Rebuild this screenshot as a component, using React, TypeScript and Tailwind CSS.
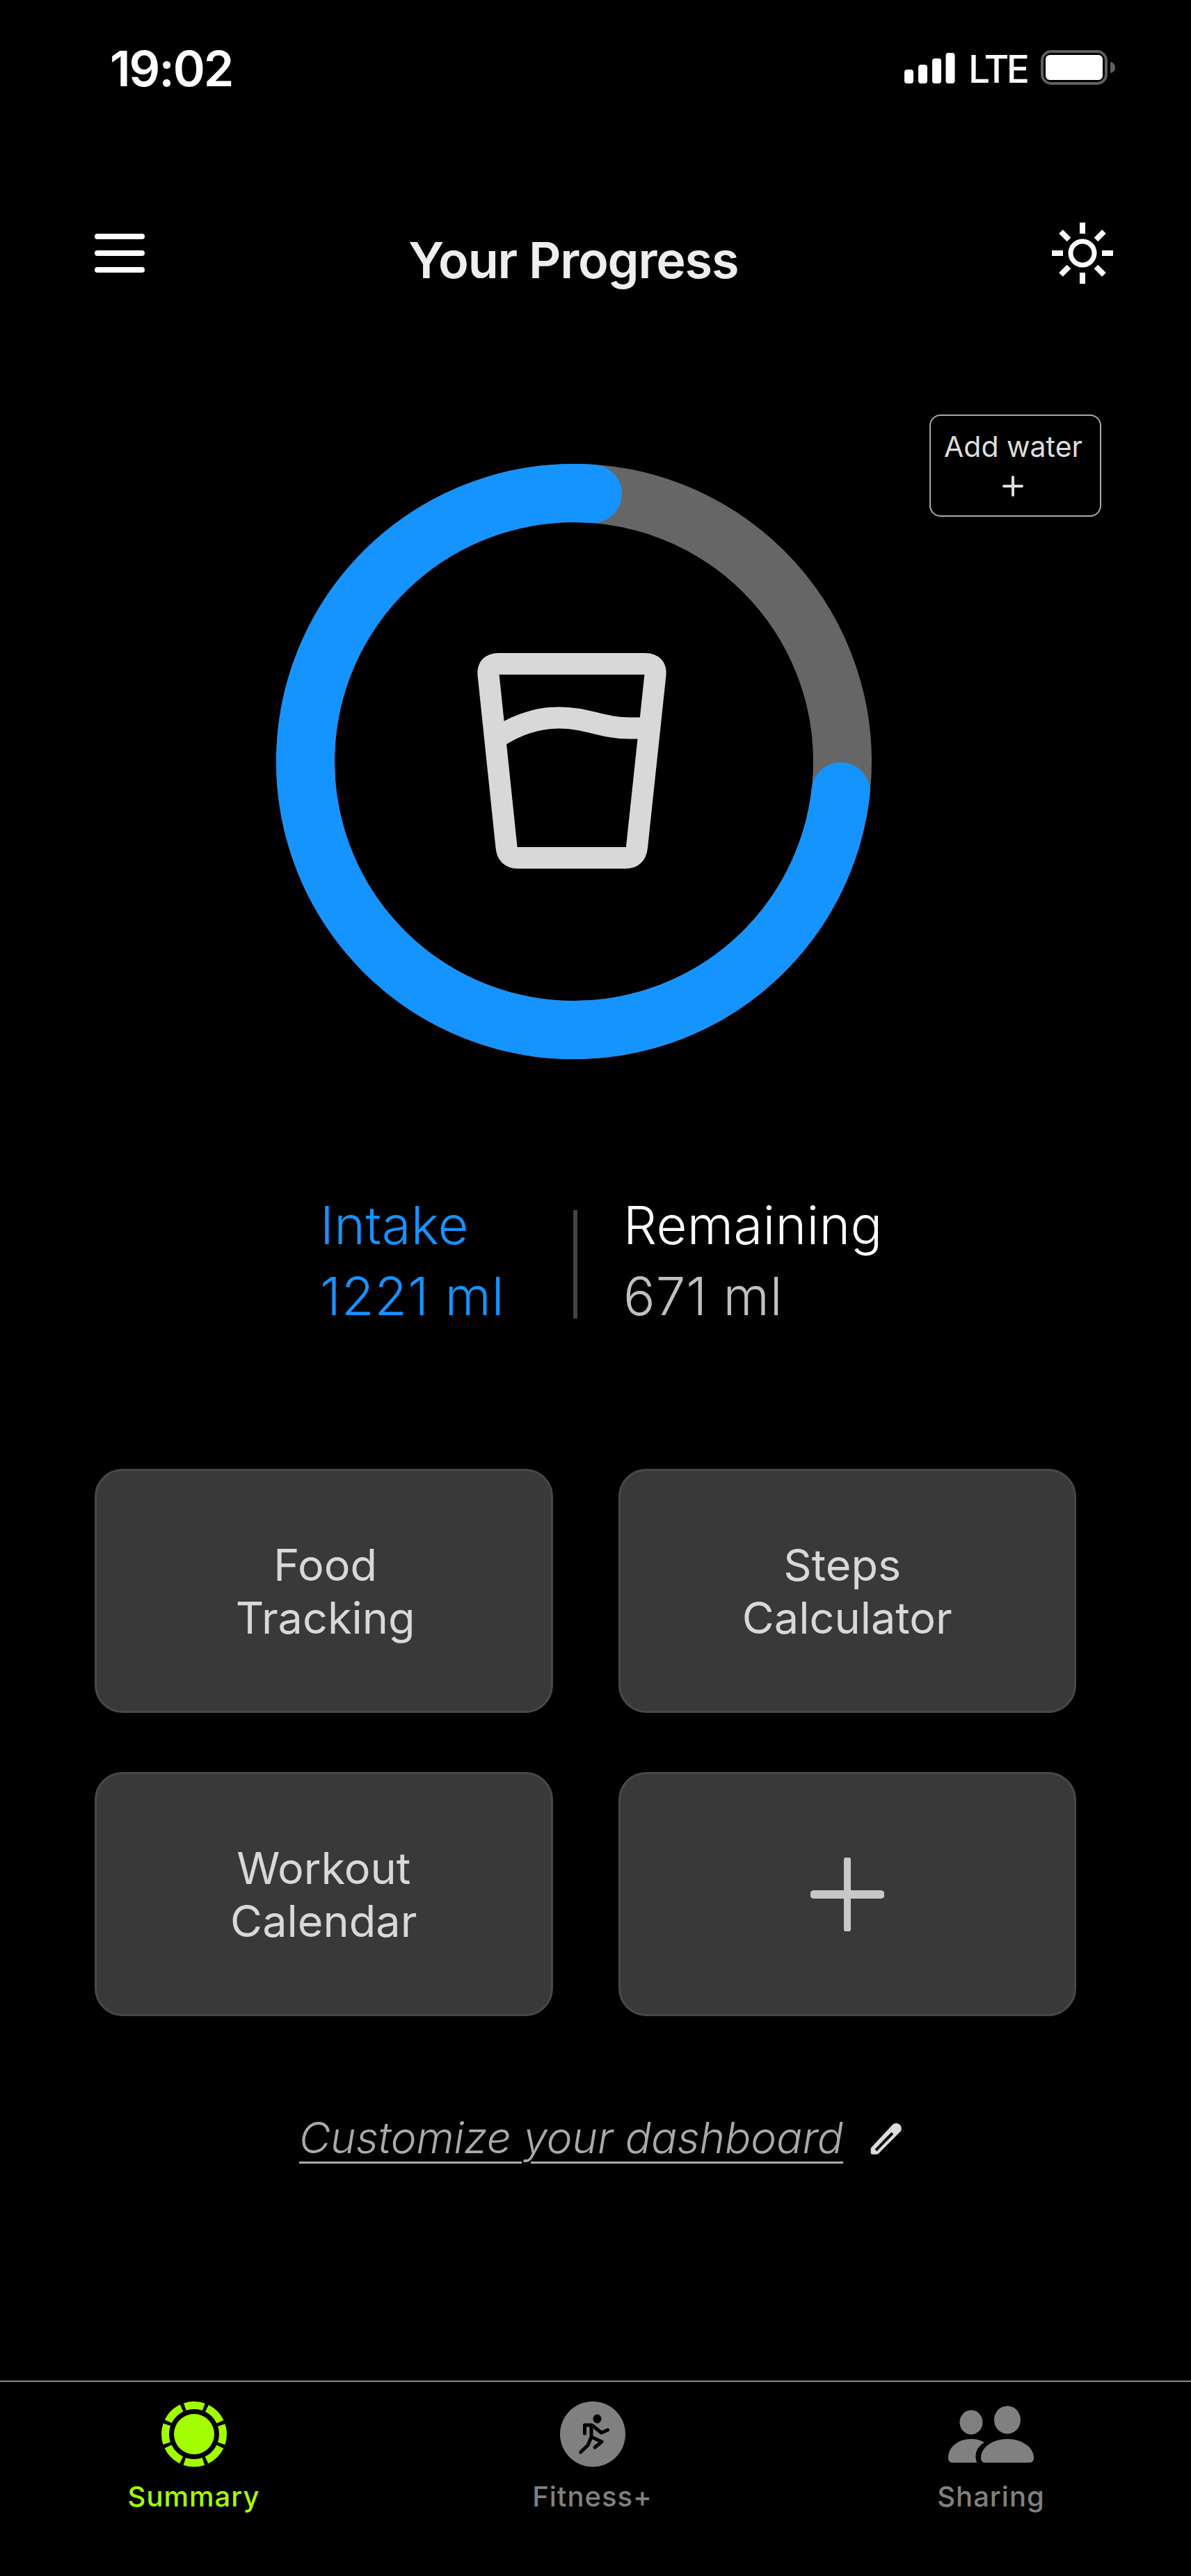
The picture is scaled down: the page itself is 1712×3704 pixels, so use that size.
import React from 'react';

const BLUE = '#1593FF';

const SignalBars = () => (
  <svg width="73" height="44" viewBox="1300 76 73 44" className="mt-[4px]" fill="#fff">
    <rect x="1300" y="100" width="13" height="20" rx="4" />
    <rect x="1320" y="93" width="13" height="27" rx="4" />
    <rect x="1340" y="84" width="13" height="36" rx="4" />
    <rect x="1359.5" y="76" width="13" height="44" rx="4" />
  </svg>
);

const Battery = () => (
  <svg width="107" height="50" viewBox="1496 72 107 50">
    <rect x="1498" y="74" width="92" height="46" rx="13" fill="none" stroke="#5f5f5f" strokeWidth="4" />
    <rect x="1503" y="79" width="82" height="36" rx="6" fill="#fff" />
    <path d="M1596 89 C1601 90 1603 93 1603 97 C1603 101 1601 104 1596 105 Z" fill="#5f5f5f" />
  </svg>
);

const Sun = () => (
  <svg width="88" height="88" viewBox="1512 320 88 88" fill="none" stroke="#fff" strokeWidth="8">
    <circle cx="1556" cy="364" r="17" strokeWidth="7" />
    <path d="M1556 320V336M1556 392V408M1512 364H1528M1584 364H1600" />
    <path d="M1525 333L1536.500 344.500M1587 333L1575.500 344.500M1525 395L1536.500 383.500M1587 395L1575.500 383.500" />
  </svg>
);

const WaterRing = () => (
  <svg width="856" height="856" viewBox="397 667 856 856" fill="none" className="ml-[397px] -mt-[76px]">
    <circle cx="825" cy="1095" r="386" stroke="#666666" strokeWidth="84" />
    <path d="M851.900 710 A386 386 0 1 0 1208.600 1138" stroke={BLUE} strokeWidth="84" strokeLinecap="round" />
    <path
      d="M717 954.500H927Q943.500 954.500 942 970L915.500 1218Q914 1233.500 899 1233.500H744Q729.500 1233.500 728 1218L702 970Q700.500 954.500 717 954.500Z"
      stroke="#D8D8D8"
      strokeWidth="31"
    />
    <path d="M712 1062C745 1040 775 1032 803 1032C845 1032 865 1047 905 1047H935" stroke="#D8D8D8" strokeWidth="31" />
  </svg>
);

const Card = ({ children }: { children: React.ReactNode }) => (
  <div className="h-[351px] rounded-[40px] border-[3px] border-[#484848] bg-[#393939] flex flex-col items-center justify-center text-[63px] leading-[76px] text-[#d8d8d8]">
    {children}
  </div>
);

const Pencil = () => (
  <svg width="46" height="46" viewBox="66 48 134 134" className="ml-[39px] mt-[9px]">
    <path
      fillRule="evenodd"
      fill="#dcdcdc"
      d="M68 155L158 58Q170 46 186 54Q202 68 194 84L100 178Q96 181 90 181H76Q68 181 68 173ZM85 160L93 168L163 97L155 88Z"
    />
  </svg>
);

const SummaryIcon = () => (
  <svg width="94" height="96" viewBox="0 0 94 94" fill="none">
    <circle cx="47" cy="47" r="29" fill="#A3FF00" />
    <circle cx="47" cy="47" r="41.500" stroke="#A3FF00" strokeWidth="11" strokeDasharray="27.600 5" strokeDashoffset="13.800" />
  </svg>
);

const FitnessIcon = () => (
  <svg width="94" height="96" viewBox="805 3452 94 94">
    <circle cx="852" cy="3499" r="47" fill="#808080" />
    <ellipse cx="858.500" cy="3477" rx="6" ry="6.500" fill="#000" />
    <path
      d="M840.500 3498V3486H850V3503L865 3510L855 3518M850 3503L845 3515L834.500 3525M852 3487L864.500 3497L873.500 3493"
      fill="none"
      stroke="#000"
      strokeWidth="5"
      strokeLinecap="round"
      strokeLinejoin="round"
    />
  </svg>
);

const SharingIcon = () => (
  <svg width="124" height="96" viewBox="1364 3452 124 94" fill="#808080">
    <ellipse cx="1397" cy="3482" rx="16.500" ry="17.500" />
    <ellipse cx="1449" cy="3478.500" rx="19" ry="20" />
    <path d="M1417 3540Q1411 3540 1411 3533C1411 3518 1428 3506 1449 3506C1470 3506 1487 3518 1487 3533Q1487 3540 1481 3540Z" />
    <path d="M1370 3540Q1364 3540 1364 3533C1364 3518 1378 3506 1397 3506C1403 3506 1410 3507 1416 3511C1405 3517 1401 3528 1405 3540Z" />
  </svg>
);

const NavItem = ({ label, color, children }: { label: string; color: string; children: React.ReactNode }) => (
  <div className={`w-[573px] flex flex-col items-center ${color}`}>
    {children}
    <span className="mt-[18px] text-[40px] leading-[48px] font-medium tracking-[1px]">{label}</span>
  </div>
);

export default function App() {
  return (
    <div className="w-[1712px] h-[3704px] bg-black text-white flex flex-col overflow-hidden font-['Inter',sans-serif]">
      <div className="h-[320px] pt-[64px] pl-[158px] pr-[109px] flex justify-between items-start">
        <span className="text-[70px] leading-none font-semibold tracking-[-2px]">19:02</span>
        <div className="flex items-start mt-[8px]">
          <SignalBars />
          <span className="w-[79px] ml-[19px] text-[55px] leading-none font-medium tracking-[-3.500px]">LTE</span>
          <div className="ml-[25px]">
            <Battery />
          </div>
        </div>
      </div>

      <div className="h-[88px] pl-[136px] pr-[112px] flex items-center">
        <div className="w-[72px] flex flex-col gap-[16px]">
          <div className="h-[8px] rounded-full bg-white" />
          <div className="h-[8px] rounded-full bg-white" />
          <div className="h-[8px] rounded-full bg-white" />
        </div>
        <h1 className="ml-[379px] mt-[20px] text-[72px] leading-none font-semibold tracking-[-1.200px] text-[#eeeeee]">Your Progress</h1>
        <div className="ml-auto">
          <Sun />
        </div>
      </div>

      <div className="mt-[188px] pr-[129px] flex justify-end">
        <button className="w-[247px] h-[147px] rounded-[16px] border-2 border-[#aaaaaa] pb-[9px] flex flex-col items-center justify-center text-[#dddddd]">
          <span className="text-[41px] leading-[50px] -translate-x-[3px]">Add water</span>
          <svg width="30" height="30" viewBox="0 0 30 30" className="mt-[17px] -translate-x-[4px]" stroke="#dddddd" strokeWidth="4" strokeLinecap="round">
            <path d="M15 2V28M2 15H28" />
          </svg>
        </button>
      </div>

      <WaterRing />

      <div className="mt-[187px] pl-[460px] flex items-start">
        <div className="w-[364px] text-[76px] leading-[102px] font-[350] text-[#1593ff]">
          <div className="tracking-[0.300px]">Intake</div>
          <div className="tracking-[1px]">1221 ml</div>
        </div>
        <div className="w-[6px] h-[156px] mt-[30px] bg-[#444444]" />
        <div className="ml-[66px] text-[76px] leading-[102px] font-[350]">
          <div className="tracking-[0.300px]">Remaining</div>
          <div className="tracking-[1px] text-[#c0c0c0]">671 ml</div>
        </div>
      </div>

      <div className="mt-[198px] ml-[136px] w-[1411px] grid grid-cols-2 gap-x-[94px] gap-y-[85px]">
        <Card>
          <span className="pl-[5px]">Food</span>
          <span className="pl-[5px]">Tracking</span>
        </Card>
        <Card>
          <span className="pr-[14px]">Steps</span>
          <span>Calculator</span>
        </Card>
        <Card>
          <span>Workout</span>
          <span>Calendar</span>
        </Card>
        <Card>
          <svg width="106" height="106" viewBox="0 0 106 106" stroke="#c8c8c8" strokeLinecap="round">
            <path d="M53 3V103" strokeWidth="10" />
            <path d="M5 53H101" strokeWidth="12" />
          </svg>
        </Card>
      </div>

      <div className="mt-[144px] pl-[430px] flex items-start">
        <span className="text-[62px] leading-none font-light italic text-[#aaaaaa] underline decoration-[3px] underline-offset-[12px]">Customize your dashboard</span>
        <Pencil />
      </div>

      <div className="mt-auto h-[281px] border-t-2 border-[#8a8a8a] pt-[27px] -ml-[8px] flex">
        <NavItem label="Summary" color="text-[#a3ff00]">
          <SummaryIcon />
        </NavItem>
        <NavItem label="Fitness+" color="text-[#808080]">
          <FitnessIcon />
        </NavItem>
        <NavItem label="Sharing" color="text-[#808080]">
          <SharingIcon />
        </NavItem>
      </div>
    </div>
  );
}
